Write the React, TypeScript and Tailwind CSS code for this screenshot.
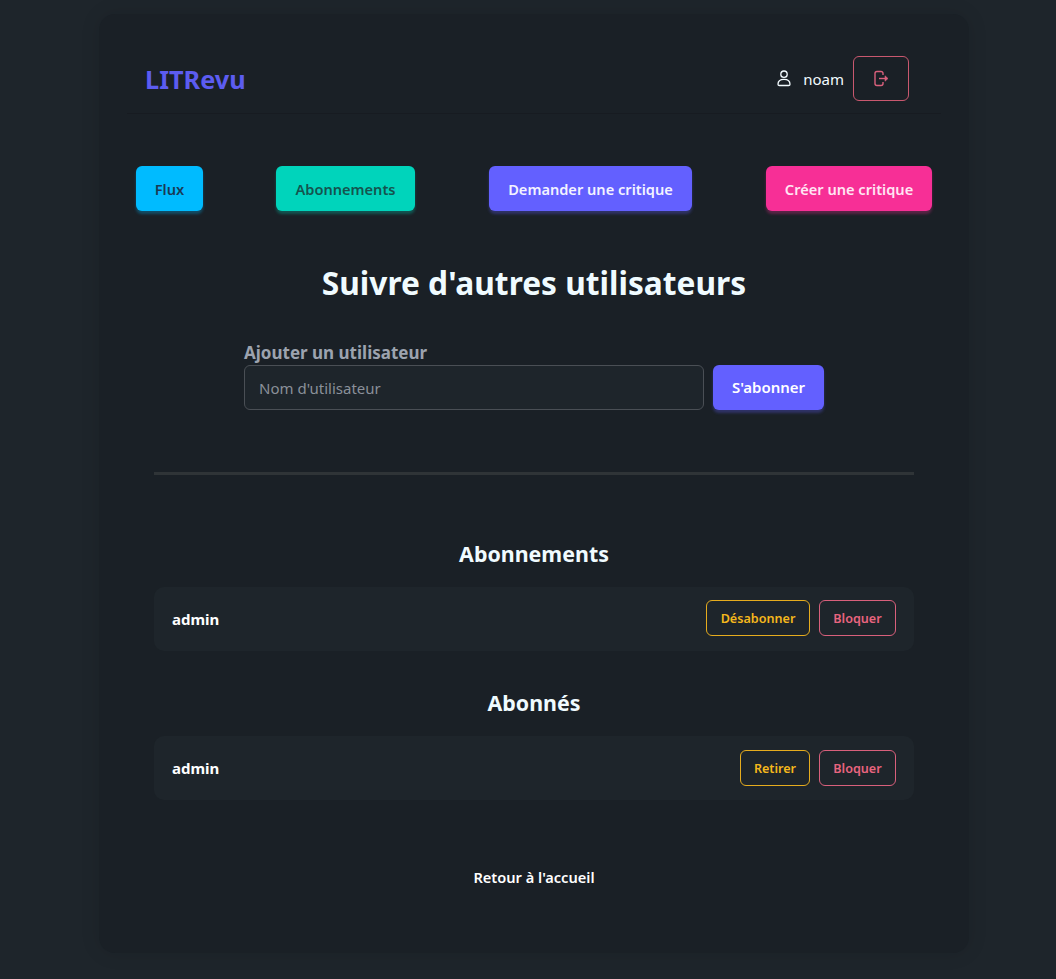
const font = { fontFamily: '"Noto Sans", sans-serif' }

function Row({ name, first, firstWidth, actionsClass }: { name: string; first: string; firstWidth: string; actionsClass?: string }) {
    return (
        <div className="flex h-16 items-center justify-between rounded-[10px] bg-[#1e252b] px-[18px]">
            <span className="text-[15px] font-bold text-white">{name}</span>
            <div className={`flex gap-[9px] ${actionsClass ?? ""}`}>
                <button className={`h-9 rounded-md border border-[#e6ac1e] pt-[3px] text-[12.6px] font-semibold text-[#f5b81c] ${firstWidth}`}>
                    {first}
                </button>
                <button className="h-9 w-[77px] rounded-md border border-[#d9607c] pt-[3px] text-[12.6px] font-semibold text-[#e8647f]">
                    Bloquer
                </button>
            </div>
        </div>
    )
}

export default function App() {
    return (
        <div style={font} className="min-h-[979px] bg-[#1e252b] pt-[14px]">
            <div className="ml-[99px] h-[939px] w-[870px] rounded-2xl bg-[#1a2026] px-7 pt-8 shadow-[0_0_20px_rgba(0,0,0,0.1)]">
                {/* Header */}
                <header className="flex h-[68px] items-center justify-between border-b border-[#171b21] pl-[18px] pr-[32px]">
                    <span className="text-[25.3px] font-bold text-[#5c5cf0]">LITRevu</span>
                    <div className="flex items-center text-[#f3fbff]">
                        <svg width="14" height="17" viewBox="0 0 14 17" fill="none" stroke="currentColor" strokeWidth="1.3" className="mb-[3px]">
                            <circle cx="7" cy="4.2" r="3.2" />
                            <path d="M1 14.2c0-3.4 2.6-4.9 6-4.9s6 1.5 6 4.9c0 .9-.6 1.3-1.4 1.3H2.4c-.8 0-1.4-.4-1.4-1.3z" />
                        </svg>
                        <span className="ml-[12px] text-[15px]">noam</span>
                        <button className="mb-[2px] ml-[9px] flex h-[45px] w-14 items-center justify-center rounded-md border border-[#c9586f] text-[#d9607c]">
                            <svg width="16" height="17" viewBox="0 0 16 17" fill="none" stroke="currentColor" strokeWidth="1.4">
                                <path d="M10 5V3.5C10 2.2 9.2 1.5 8 1.5H4C2.8 1.5 2 2.2 2 3.5v10c0 1.3.8 2 2 2h4c1.2 0 2-.7 2-2V12" />
                                <path d="M6 8.5h7" />
                                <path d="M12 5.8l3 2.7-3 2.7z" fill="currentColor" strokeWidth="0.6" />
                            </svg>
                        </button>
                    </div>
                </header>

                {/* Nav */}
                <nav className="mt-[52px] flex pl-[9px]">
                    <button className="mr-[73px] h-[45px] w-[67px] rounded-md bg-[#00bbff] pt-[2px] text-[14.6px] font-semibold text-[#1a3a55] shadow-[0_3px_3px_rgba(0,187,255,0.3)]">
                        Flux
                    </button>
                    <button className="mr-[74px] h-[45px] w-[139px] rounded-md bg-[#00d4bb] pt-[2px] text-[14.6px] font-semibold text-[#14544f] shadow-[0_3px_3px_rgba(0,212,187,0.3)]">
                        Abonnements
                    </button>
                    <button className="mr-[74px] h-[45px] w-[203px] rounded-md bg-[#6360ff] pt-[2px] text-[14.6px] font-semibold text-[#f3f3ff] shadow-[0_3px_3px_rgba(99,96,255,0.3)]">
                        Demander une critique
                    </button>
                    <button className="h-[45px] w-[166px] rounded-md bg-[#f72f96] pt-[2px] text-[14.6px] font-semibold text-[#ffe6f3] shadow-[0_3px_3px_rgba(247,47,150,0.3)]">
                        Créer une critique
                    </button>
                </nav>

                <h1 className="mt-[48px] text-center text-[31.7px] leading-[48px] font-bold text-[#f0fbff]">
                    Suivre d'autres utilisateurs
                </h1>

                {/* Follow form */}
                <form className="ml-[117px] mt-[36px] w-[580px]">
                    <label className="mb-[2px] block text-[17px] leading-[20px] font-bold text-[#9ca3af]">
                        Ajouter un utilisateur
                    </label>
                    <div className="flex gap-[9px]">
                        <input
                            placeholder="Nom d'utilisateur"
                            className="h-[45px] w-[460px] rounded-md border border-[#4a4f55] bg-[#1e252b] px-[14px] text-[15px] text-white outline-none placeholder:text-[#8a9099]"
                        />
                        <button className="h-[45px] w-[111px] rounded-md bg-[#6360ff] text-[15px] font-semibold text-white shadow-[0_3px_3px_rgba(99,96,255,0.3)]">
                            S'abonner
                        </button>
                    </div>
                </form>

                <div className="mx-[27px] mt-[62px] h-[3px] bg-[#2f3437]" />

                {/* Lists */}
                <section className="mx-[27px] mt-[64px]">
                    <h2 className="mb-[19px] text-center text-[21.4px] leading-[29px] font-bold text-[#f0fbff]">Abonnements</h2>
                    <Row name="admin" first="Désabonner" firstWidth="w-[104px]" actionsClass="mb-[2px]" />
                </section>
                <section className="mx-[27px] mt-[37px]">
                    <h2 className="mb-[19px] text-center text-[21.4px] leading-[29px] font-bold text-[#f0fbff]">Abonnés</h2>
                    <Row name="admin" first="Retirer" firstWidth="w-[70px]" />
                </section>

                <div className="mt-[65px] text-center">
                    <a className="text-[14.6px] font-semibold text-white">Retour à l'accueil</a>
                </div>
            </div>
        </div>
    )
}
